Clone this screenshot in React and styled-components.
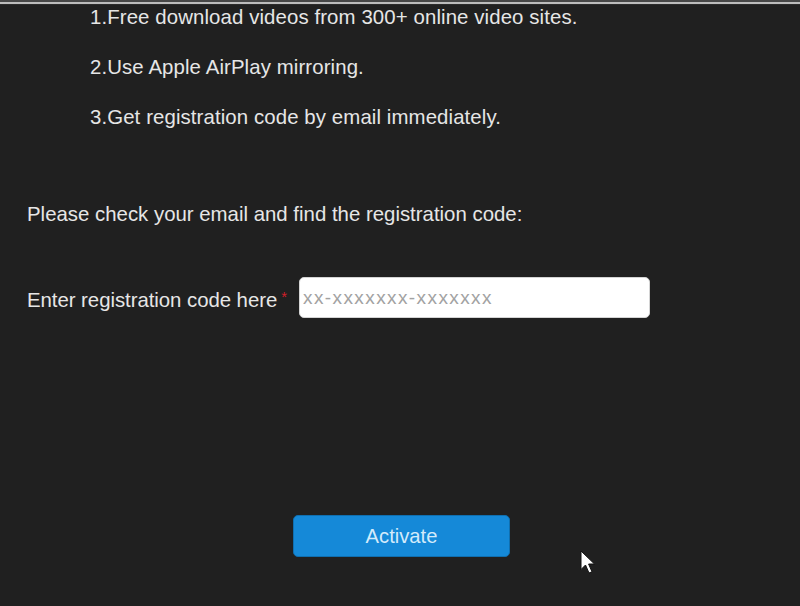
import React from "react";
import styled, { createGlobalStyle } from "styled-components";

const GlobalStyle = createGlobalStyle`
  html, body {
    margin: 0;
    padding: 0;
    background: #202020;
  }
  body {
    font-family: "Liberation Sans", Arial, sans-serif;
  }
`;

const Page = styled.div`
  position: relative;
  width: 800px;
  height: 606px;
  overflow: hidden;
  background: #202020;
  color: #e6e6e6;
  font-family: "Liberation Sans", Arial, sans-serif;
  font-size: 20.4px;
  line-height: 24px;
  display: flex;
  flex-direction: column;
`;

const TopEdge = styled.div`
  height: 2px;
  background: #bdbdbd;
  border-top: 2px solid #474747;
  border-bottom: 1px solid #2b2b2b;
  flex: none;
`;

const Content = styled.div`
  display: flex;
  flex-direction: column;
  padding-left: 27px;
`;

const FeatureList = styled.ol`
  list-style: none;
  margin: 0 0 0 63px;
  padding: 0;
  display: flex;
  flex-direction: column;
  gap: 26px;
`;

const Feature = styled.li`
  margin: 0;
  white-space: nowrap;
  letter-spacing: 0.1px;
`;

const Prompt = styled.p`
  margin: 73px 0 0;
  white-space: nowrap;
`;

const FormRow = styled.div`
  margin-top: 51px;
  display: flex;
  align-items: center;
`;

const Label = styled.label`
  white-space: nowrap;
  padding-top: 4px;
  display: flex;
  align-items: flex-start;
  letter-spacing: -0.05px;
`;

const Required = styled.span`
  color: #d11f2a;
  font-size: 15px;
  line-height: 15px;
  margin-left: 4px;
  margin-top: 1px;
`;

const CodeInput = styled.input`
  box-sizing: border-box;
  margin-left: 12px;
  width: 351px;
  height: 41px;
  border: 1px solid #d4d4d4;
  border-radius: 5px;
  background: #ffffff;
  padding: 0 0 0 3px;
  font-family: "Liberation Sans", Arial, sans-serif;
  font-size: 19px;
  letter-spacing: 1.4px;
  color: #333;
  outline: none;

  &::placeholder {
    color: #a2a2a2;
  }
`;

const ButtonArea = styled.div`
  margin-top: 197px;
  display: flex;
  justify-content: center;
  padding-left: 3px;
`;

const ActivateButton = styled.button`
  width: 217px;
  height: 42px;
  border: 1px solid #0f6fb0;
  border-radius: 5px;
  background: #1589d8;
  color: #d3ebfb;
  font-family: "Liberation Sans", Arial, sans-serif;
  font-size: 20.2px;
  padding: 0;
  cursor: pointer;
`;

const Cursor = styled.svg`
  position: absolute;
  left: 580px;
  top: 550px;
  pointer-events: none;
`;

const features = [
  "1.Free download videos from 300+ online video sites.",
  "2.Use Apple AirPlay mirroring.",
  "3.Get registration code by email immediately.",
];

export default function App() {
  return (
    <>
      <GlobalStyle />
      <Page>
        <TopEdge />
        <Content>
          <FeatureList>
            {features.map((f) => (
              <Feature key={f}>{f}</Feature>
            ))}
          </FeatureList>
          <Prompt>Please check your email and find the registration code:</Prompt>
          <FormRow>
            <Label htmlFor="code">
              Enter registration code here
              <Required>*</Required>
            </Label>
            <CodeInput id="code" placeholder="xx-xxxxxxx-xxxxxxx" />
          </FormRow>
        </Content>
        <ButtonArea>
          <ActivateButton type="button">Activate</ActivateButton>
        </ButtonArea>
        <Cursor width="17" height="25" viewBox="0 0 17 25">
          <path
            d="M1 1 L1 19.5 L5.5 15 L9 23 L12 21.8 L8.6 14 L14.5 14 Z"
            fill="#ffffff"
            stroke="#111"
            strokeWidth="1"
            strokeLinejoin="round"
          />
        </Cursor>
      </Page>
    </>
  );
}
